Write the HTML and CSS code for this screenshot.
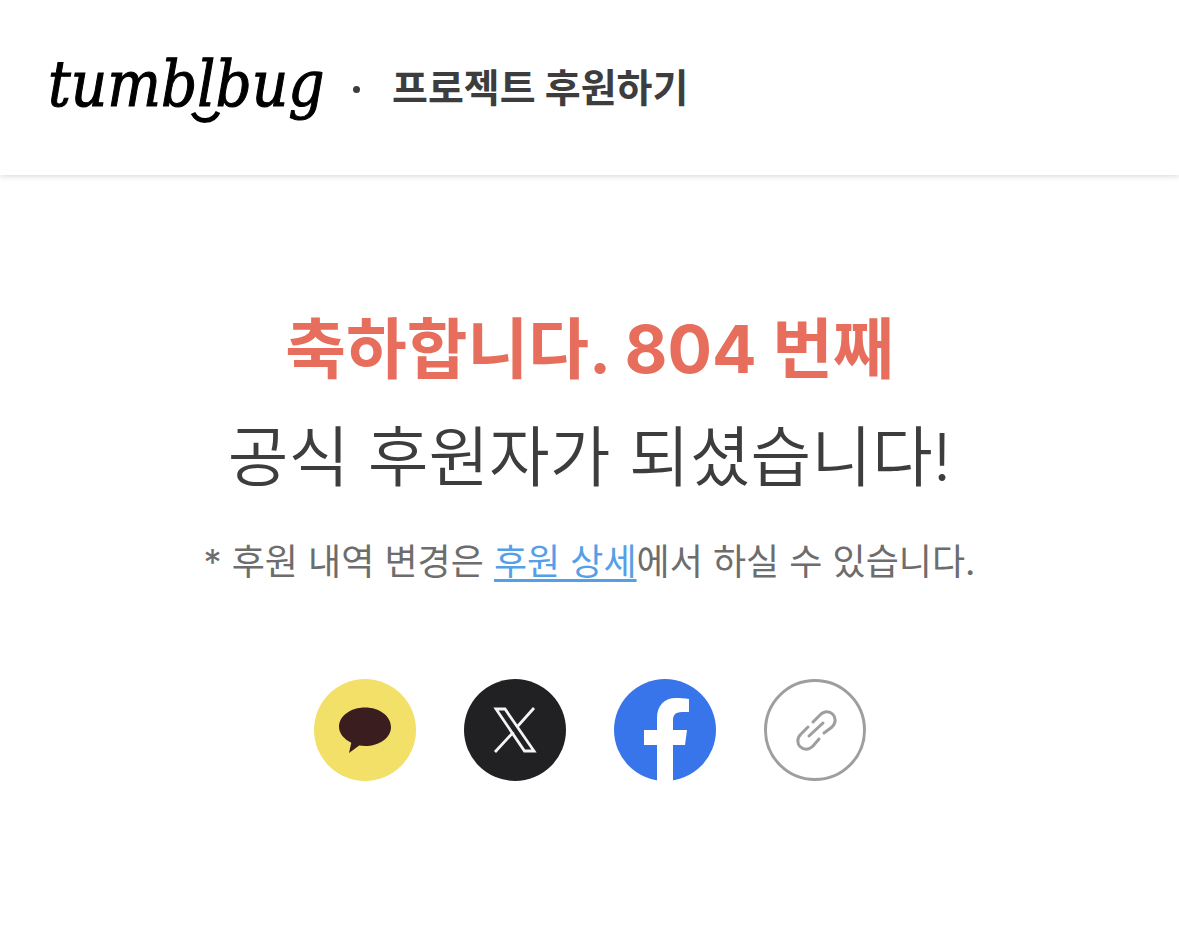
FILE: index.html
```html
<!DOCTYPE html>
<html lang="ko">
<head>
<meta charset="utf-8">
<meta name="viewport" content="width=device-width, initial-scale=1">
<title>tumblbug · 프로젝트 후원하기</title>
<link rel="stylesheet" href="styles.css">
</head>
<body>
<header class="header">
  <a class="logo" href="#" aria-label="tumblbug">
    <svg width="276" height="76" viewBox="0 0 276 76">
      <text class="logo-text" x="0" y="56">tumblbug</text>
      <path d="M145 63c5 10 20 10 25-1" fill="none" stroke="#000" stroke-width="5"/>
    </svg>
  </a>
  <span class="dot"></span>
  <h1 class="header-title">프로젝트 후원하기</h1>
</header>
<main class="main">
  <h2 class="message"><strong class="count">축하합니다. 804 번째</strong><span class="thanks">공식 후원자가 되셨습니다!</span></h2>
  <p class="note">* 후원 내역 변경은 <a class="note-link" href="#">후원 상세</a>에서 하실 수 있습니다.</p>
  <div class="share">
    <button class="share-button" type="button" aria-label="카카오톡 공유">
      <svg viewBox="0 0 102 102"><circle cx="51" cy="51" r="51" fill="#f2e068"/><path d="M51 28.500c14.500 0 26 8.700 26 19.500S65.500 67 51 67c-2 0-4-.1-5.800-.4L35 74l2.300-10.300C30 60.200 25 54.300 25 48 25 37 36.500 28.500 51 28.500Z" fill="#391d1f"/></svg>
    </button>
    <button class="share-button" type="button" aria-label="X 공유">
      <svg viewBox="0 0 102 102"><circle cx="51" cy="51" r="51" fill="#212123"/><path d="M32 30h9l29 42H60.500ZM31 73l18.500-20M53 48l17-19" fill="none" stroke="#f4f4f4" stroke-width="2.800"/></svg>
    </button>
    <button class="share-button" type="button" aria-label="페이스북 공유">
      <svg viewBox="0 0 102 102"><circle cx="51" cy="51" r="51" fill="#3975ea"/><path d="M43 102V66H30V51h13V39c0-12.500 7.500-20 19-20 4 0 8 .2 13 1v13h-7c-7 0-9 3.500-9 8.500V51h14l-2 15H59v36Z" fill="#fff"/></svg>
    </button>
    <button class="share-button" type="button" aria-label="링크 복사">
      <svg viewBox="0 0 102 102" fill="none" stroke="#9e9e9e" stroke-width="3"><circle cx="51" cy="51" r="49.500"/><path d="m49 43 7-7c9-9 21 3 12 12l-8 6M44 48l-7 7c-9 9 3 21 12 12l6-7M45 57l14-13" stroke-linecap="round"/></svg>
    </button>
  </div>
</main>
</body>
</html>
```
FILE: styles.css
```css
* { box-sizing: border-box; }
body {
  margin: 0;
  background: #fff;
  color: #3d3d3d;
  font-family: Inter, "Noto Sans CJK KR", sans-serif;
}
.header {
  display: flex;
  align-items: center;
  min-height: 175px;
  padding: 0 48px;
  background: #fff;
  box-shadow: 0 1px 6px rgba(0, 0, 0, 0.16);
}
.logo { display: block; height: 76px; }
.logo svg { display: block; overflow: visible; }
.logo-text { font-family: "DejaVu Serif Condensed", "DejaVu Serif", serif; font-style: italic; font-size: 63px; stroke: #000; stroke-width: 1px; }
.dot { width: 7px; height: 7px; margin: 4px 32px 0 29px; border-radius: 50%; background: #3d3d3d; }
.header-title { margin: 0; font-size: 39px; line-height: 56px; font-weight: 700; }
.main { padding: 120px 24px; text-align: center; }
.message { margin: 0; font-size: 66px; line-height: 108px; font-weight: 350; }
.count, .thanks { display: block; }
.count { color: #e76e5c; font-weight: 700; }
.note { margin: 24px 0 0; color: #6d6d6d; font-size: 36px; line-height: 54px; }
.note-link { color: #559fe9; text-decoration: underline; text-decoration-thickness: 3px; text-underline-offset: 4px; }
.share { display: flex; justify-content: center; gap: 48px; margin-top: 90px; }
.share-button { width: 102px; height: 102px; padding: 0; border: 0; border-radius: 50%; background: none; cursor: pointer; }
.share-button svg { display: block; width: 100%; height: 100%; }
```
